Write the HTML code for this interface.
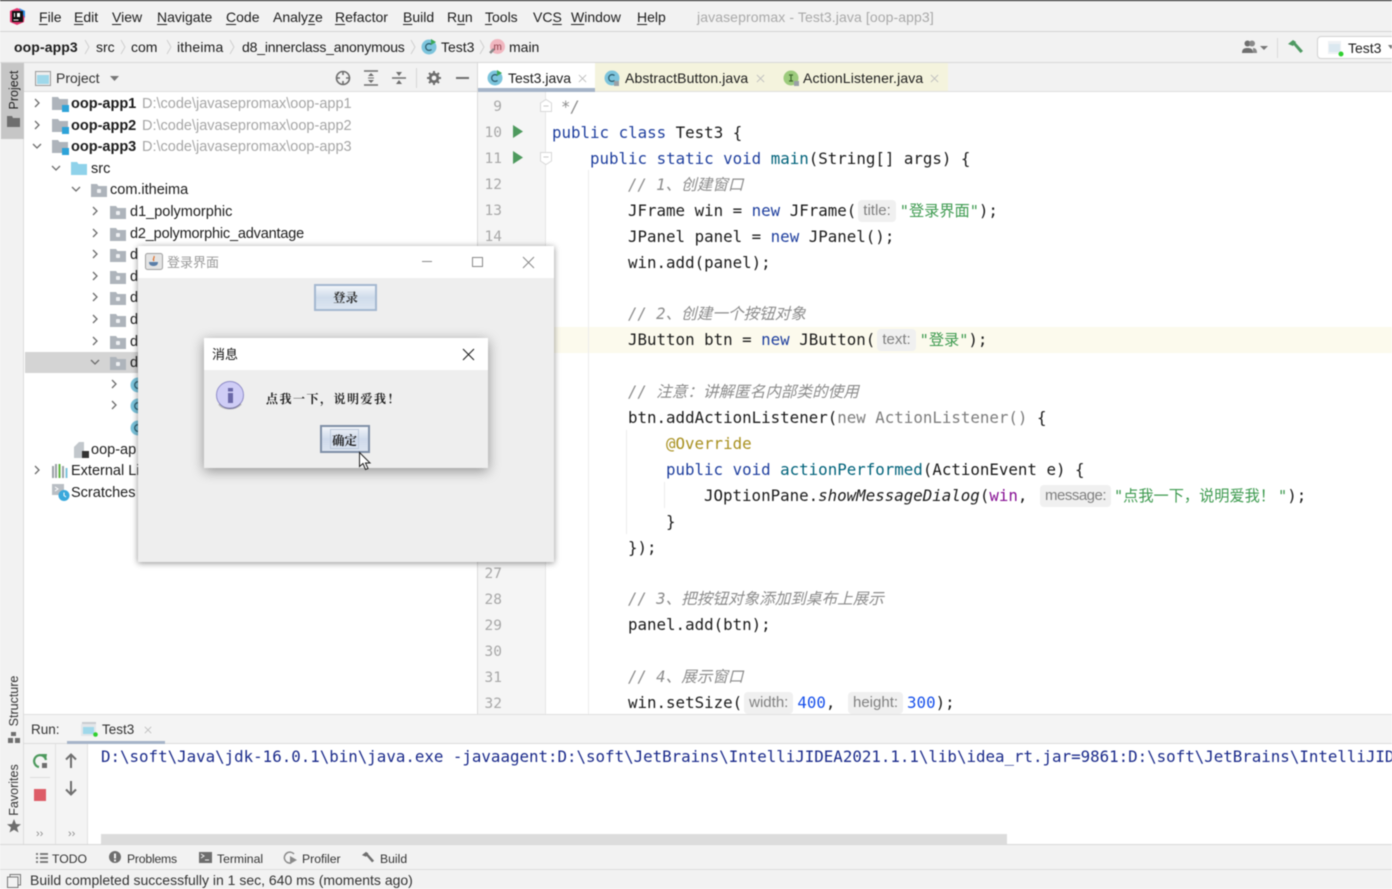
<!DOCTYPE html>
<html><head><meta charset="utf-8">
<style>
html,body{margin:0;padding:0;background:#fff}
#r{position:relative;width:1392px;height:889px;overflow:hidden;background:#fff;font-family:"Liberation Sans","Noto Sans CJK SC",sans-serif;font-size:14px;color:#1c1c1c;filter:blur(.4px)}
.a{position:absolute}
.t{position:absolute;white-space:pre;line-height:20px;height:20px}
.u{text-decoration:underline;text-underline-offset:2px;text-decoration-thickness:1px}
.c{position:absolute;white-space:pre;line-height:26px;height:26px;font-family:"DejaVu Sans Mono","Noto Sans CJK SC",monospace;font-size:15.8px;color:#1a1a1a}
.k{color:#1f3f9e}.m{color:#00627a}.s{color:#3d9a4f;font-size:15.2px}.g{font-style:italic;color:#8c8c8c;font-size:15.6px}.n{color:#1750eb}.an{color:#a8901f}.v{color:#871094}.f{color:#7d7d7d}
.h{display:inline-block;font-family:"Liberation Sans",sans-serif;font-size:15px;color:#808080;background:#f0f0f0;border-radius:4px;line-height:22px;height:22px;padding:0 5px;margin:0 4px 0 2px;vertical-align:1px;font-style:normal}
.ln{position:absolute;left:478px;width:24px;text-align:right;font-family:"DejaVu Sans Mono",monospace;font-size:14.5px;color:#a8a8a8;line-height:26px}
svg{position:absolute;overflow:visible}
.tr{font-size:14.5px}
.b{font-weight:bold}
.gr{color:#a6a6a6}
.st{font-size:12.2px;color:#333}
.sd{font-size:12.5px}
</style></head><body><div id="r">
<svg width="0" height="0" style="position:absolute"><defs>
<symbol id="fo" viewBox="0 0 16 14"><path d="M0 1h6l1.500 2H16v11H0z" fill="#aeb4bb"/><rect x="6" y="6" width="4" height="4" rx="1" fill="#eef0f2"/></symbol>
<symbol id="mo" viewBox="0 0 18 16"><path d="M0 1h6l1.500 2H16v11H0z" fill="#aeb4bb"/><rect x="10" y="9" width="7" height="7" fill="#2ea3d8"/></symbol>
<symbol id="ar" viewBox="0 0 10 10"><path d="M3 1l4 4-4 4" fill="none" stroke="#6e6e6e" stroke-width="1.300"/></symbol>
<symbol id="dn" viewBox="0 0 10 10"><path d="M1 3l4 4 4-4" fill="none" stroke="#6e6e6e" stroke-width="1.300"/></symbol>
<symbol id="cl" viewBox="0 0 16 16"><circle cx="8" cy="8" r="7.500" fill="#7cc4dc"/><path d="M10.500 5.600A3.400 3.400 0 1 0 10.500 10.400" fill="none" stroke="#2b5a6a" stroke-width="1.200"/></symbol>
<symbol id="x" viewBox="0 0 10 10"><path d="M1 1l8 8M9 1l-8 8" fill="none" stroke="#bdbdbd" stroke-width="1"/></symbol>
</defs></svg>

<!-- top chrome -->
<div class="a" style="left:0;top:0;width:1392px;height:1px;background:#111"></div>
<div class="a" style="left:0;top:1px;width:1392px;height:91px;background:#f2f2f2"></div>
<div class="a" style="left:0;top:31px;width:1392px;height:1px;background:#d4d4d4"></div>
<div class="a" style="left:0;top:62px;width:1392px;height:1px;background:#d8d8d8"></div>
<div class="a" style="left:0;top:91px;width:1392px;height:1px;background:#dedede"></div>

<!-- IJ logo -->
<svg style="left:9px;top:8px" width="17" height="17" viewBox="0 0 17 17"><path d="M1 3L8 0l8 3-1 11-7 3-7-3z" fill="#e2356e"/><path d="M10 0l6 3v7z" fill="#2f8fe8"/><rect x="3" y="3" width="11" height="11" fill="#111"/><rect x="4.500" y="11.500" width="5" height="1" fill="#fff"/><rect x="5" y="5" width="1" height="4" fill="#fff"/><rect x="8" y="5" width="3" height="4" fill="#fff"/></svg>

<div class="t" style="left:39px;top:7px"><span class="u">F</span>ile</div>
<div class="t" style="left:74px;top:7px"><span class="u">E</span>dit</div>
<div class="t" style="left:112px;top:7px"><span class="u">V</span>iew</div>
<div class="t" style="left:157px;top:7px"><span class="u">N</span>avigate</div>
<div class="t" style="left:226px;top:7px"><span class="u">C</span>ode</div>
<div class="t" style="left:273px;top:7px">Analy<span class="u">z</span>e</div>
<div class="t" style="left:335px;top:7px"><span class="u">R</span>efactor</div>
<div class="t" style="left:403px;top:7px"><span class="u">B</span>uild</div>
<div class="t" style="left:447px;top:7px">R<span class="u">u</span>n</div>
<div class="t" style="left:485px;top:7px"><span class="u">T</span>ools</div>
<div class="t" style="left:533px;top:7px">VC<span class="u">S</span></div>
<div class="t" style="left:571px;top:7px"><span class="u">W</span>indow</div>
<div class="t" style="left:637px;top:7px"><span class="u">H</span>elp</div>
<div class="t" style="left:697px;top:7px;color:#a9a9a9;letter-spacing:.1px">javasepromax - Test3.java [oop-app3]</div>

<!-- breadcrumbs -->
<div class="t b" style="left:14px;top:37px;letter-spacing:.1px">oop-app3</div>
<svg style="left:84px;top:39px" width="6" height="16" viewBox="0 0 6 16"><path d="M1 1l4 7-4 7" fill="none" stroke="#cfcfcf"/></svg>
<div class="t" style="left:96px;top:37px">src</div>
<svg style="left:120px;top:39px" width="6" height="16" viewBox="0 0 6 16"><path d="M1 1l4 7-4 7" fill="none" stroke="#cfcfcf"/></svg>
<div class="t" style="left:131px;top:37px">com</div>
<svg style="left:166px;top:39px" width="6" height="16" viewBox="0 0 6 16"><path d="M1 1l4 7-4 7" fill="none" stroke="#cfcfcf"/></svg>
<div class="t" style="left:177px;top:37px;letter-spacing:.2px">itheima</div>
<svg style="left:229px;top:39px" width="6" height="16" viewBox="0 0 6 16"><path d="M1 1l4 7-4 7" fill="none" stroke="#cfcfcf"/></svg>
<div class="t" style="left:242px;top:37px;letter-spacing:-.17px">d8_innerclass_anonymous</div>
<svg style="left:410px;top:39px" width="6" height="16" viewBox="0 0 6 16"><path d="M1 1l4 7-4 7" fill="none" stroke="#cfcfcf"/></svg>
<svg style="left:421px;top:39px" width="16" height="16"><use href="#cl"/><path d="M10 0l5 3-5 3z" fill="#3aa757"/></svg>
<div class="t" style="left:441px;top:37px">Test3</div>
<svg style="left:479px;top:39px" width="6" height="16" viewBox="0 0 6 16"><path d="M1 1l4 7-4 7" fill="none" stroke="#cfcfcf"/></svg>
<svg style="left:489px;top:39px" width="16" height="16" viewBox="0 0 16 16"><circle cx="8.500" cy="7.500" r="7.500" fill="#f1b7c0"/><path d="M1 14l4-4" stroke="#888" stroke-width="2.500"/><text x="4.500" y="11" font-size="10" fill="#8a3a46" font-family="Liberation Sans">m</text></svg>
<div class="t" style="left:509px;top:37px">main</div>

<!-- right toolbar -->
<svg style="left:1242px;top:40px" width="28" height="14" viewBox="0 0 28 14"><circle cx="5.500" cy="3.500" r="3" fill="#6e6e6e"/><circle cx="10" cy="3.500" r="3" fill="#8a8a8a"/><path d="M0 13c0-4 2-5 5.500-5S11 9 11 13z" fill="#6e6e6e"/><path d="M11 13h4c0-3-1-5-4-5z" fill="#8a8a8a"/><path d="M18 6h8l-4 4z" fill="#777"/></svg>
<div class="a" style="left:1277px;top:38px;width:1px;height:20px;background:#dadada"></div>
<svg style="left:1287px;top:39px" width="17" height="16" viewBox="0 0 17 16"><path d="M1 5l5-4 3 2-3 4z" fill="#4f9a63"/><path d="M5 4l2-2 9 10-2.500 2z" fill="#4f9a63"/></svg>
<div class="a" style="left:1317px;top:36px;width:90px;height:23px;background:#fff;border:1px solid #d2d2d2;border-radius:4px;box-sizing:border-box"></div>
<svg style="left:1327px;top:40px" width="17" height="17" viewBox="0 0 17 17"><rect x="1" y="1" width="13" height="13" fill="#eef1f4"/><rect x="2" y="4" width="11" height="8" fill="#dbe8f0"/><circle cx="14" cy="14" r="2.500" fill="#2fd02f"/></svg>
<div class="t" style="left:1348px;top:38px">Test3</div>
<svg style="left:1388px;top:45px" width="6" height="5"><path d="M0 0h6l-3 4z" fill="#777"/></svg>

<!-- left stripe -->
<div class="a" style="left:0;top:63px;width:24px;height:782px;background:#f2f2f2;border-right:1px solid #dcdcdc;box-sizing:border-box"></div>
<div class="a" style="left:1px;top:63px;width:23px;height:76px;background:#c6c6c6"></div>
<div class="t sd" style="left:14px;top:90px;transform:translate(-50%,-50%) rotate(-90deg);transform-origin:center;color:#222">Project</div>
<svg style="left:7px;top:116px" width="13" height="11"><path d="M0 0h5l1 2h7v9H0z" fill="#6e6e6e"/></svg>
<div class="t sd" style="left:14px;top:701px;transform:translate(-50%,-50%) rotate(-90deg);color:#333">Structure</div>
<svg style="left:8px;top:732px" width="12" height="11"><rect x="3" y="0" width="5" height="4" fill="#6e6e6e"/><rect x="0" y="6" width="5" height="5" fill="#6e6e6e"/><rect x="7" y="6" width="5" height="5" fill="#6e6e6e"/></svg>
<div class="t sd" style="left:14px;top:790px;transform:translate(-50%,-50%) rotate(-90deg);color:#333">Favorites</div>
<svg style="left:7px;top:819px" width="14" height="14" viewBox="0 0 14 14"><path d="M7 0l2 5 5 .3-4 3.200 1.500 5L7 10.700 2.500 13.500 4 8.500 0 5.300 5 5z" fill="#6e6e6e"/></svg>

<!-- project header -->
<svg style="left:35px;top:71px" width="16" height="15"><rect x=".5" y=".5" width="15" height="14" fill="#eee" stroke="#9a9a9a"/><rect x="2" y="4" width="12" height="9" fill="#9fd8ea"/></svg>
<div class="t" style="left:56px;top:68px;color:#333">Project</div>
<svg style="left:110px;top:76px" width="9" height="6"><path d="M0 0h9l-4.500 5z" fill="#777"/></svg>
<svg style="left:335px;top:70px" width="16" height="16" viewBox="0 0 16 16"><circle cx="8" cy="8" r="6.500" fill="none" stroke="#6e6e6e" stroke-width="1.600"/><path d="M8 1v4M8 11v4M1 8h4M11 8h4" stroke="#6e6e6e" stroke-width="1.600"/></svg>
<svg style="left:364px;top:70px" width="14" height="16" viewBox="0 0 14 16"><path d="M0 1h14M0 15h14" stroke="#6e6e6e" stroke-width="1.500"/><path d="M7 3l3 3H4zM7 13l3-3H4z" fill="#6e6e6e"/><path d="M4 8h6" stroke="#6e6e6e"/></svg>
<svg style="left:392px;top:70px" width="14" height="16" viewBox="0 0 14 16"><path d="M0 8h14" stroke="#6e6e6e" stroke-width="1.500"/><path d="M7 6l3-4H4zM7 10l3 4H4z" fill="#6e6e6e"/></svg>
<div class="a" style="left:416px;top:68px;width:1px;height:20px;background:#d6d6d6"></div>
<svg style="left:427px;top:71px" width="14" height="14" viewBox="0 0 14 14"><circle cx="7" cy="7" r="3.800" fill="none" stroke="#6e6e6e" stroke-width="2.800"/><path d="M7 0v2.500M7 11.500V14M0 7h2.500M11.500 7H14M2 2l2 2M10 10l2 2M12 2l-2 2M4 10l-2 2" stroke="#6e6e6e" stroke-width="2"/></svg>
<div class="a" style="left:456px;top:77px;width:13px;height:2px;background:#6e6e6e"></div>

<!-- tree -->
<div class="a" style="left:25px;top:352px;width:453px;height:21px;background:#d4d4d4"></div>
<svg style="left:32px;top:98px" width="10" height="10"><use href="#ar"/></svg>
<svg style="left:32px;top:120px" width="10" height="10"><use href="#ar"/></svg>
<svg style="left:32px;top:141px" width="10" height="10"><use href="#dn"/></svg>
<svg style="left:52px;top:96px" width="18" height="16"><use href="#mo"/></svg>
<svg style="left:52px;top:118px" width="18" height="16"><use href="#mo"/></svg>
<svg style="left:52px;top:139px" width="18" height="16"><use href="#mo"/></svg>
<div class="t tr b" style="left:71px;top:94px">oop-app1</div><div class="t tr gr" style="left:142px;top:94px">D:\code\javasepromax\oop-app1</div>
<div class="t tr b" style="left:71px;top:116px">oop-app2</div><div class="t tr gr" style="left:142px;top:116px">D:\code\javasepromax\oop-app2</div>
<div class="t tr b" style="left:71px;top:137px">oop-app3</div><div class="t tr gr" style="left:142px;top:137px">D:\code\javasepromax\oop-app3</div>
<svg style="left:51px;top:163px" width="10" height="10"><use href="#dn"/></svg>
<svg style="left:71px;top:161px" width="16" height="14" viewBox="0 0 16 14"><path d="M0 1h6l1.500 2H16v11H0z" fill="#8fd2ea"/></svg>
<div class="t tr" style="left:91px;top:159px">src</div>
<svg style="left:71px;top:184px" width="10" height="10"><use href="#dn"/></svg>
<svg style="left:91px;top:183px" width="16" height="14"><use href="#fo"/></svg>
<div class="t tr" style="left:110px;top:180px">com.itheima</div>
<svg style="left:90px;top:206px" width="10" height="10"><use href="#ar"/></svg>
<svg style="left:110px;top:205px" width="16" height="14"><use href="#fo"/></svg>
<div class="t tr" style="left:130px;top:202px">d1_polymorphic</div>
<svg style="left:90px;top:228px" width="10" height="10"><use href="#ar"/></svg>
<svg style="left:110px;top:227px" width="16" height="14"><use href="#fo"/></svg>
<div class="t tr" style="left:130px;top:224px;letter-spacing:-.17px">d2_polymorphic_advantage</div>
<svg style="left:90px;top:249px" width="10" height="10"><use href="#ar"/></svg><svg style="left:110px;top:248px" width="16" height="14"><use href="#fo"/></svg><div class="t tr" style="left:130px;top:245px">d</div>
<svg style="left:90px;top:271px" width="10" height="10"><use href="#ar"/></svg><svg style="left:110px;top:270px" width="16" height="14"><use href="#fo"/></svg><div class="t tr" style="left:130px;top:267px">d</div>
<svg style="left:90px;top:292px" width="10" height="10"><use href="#ar"/></svg><svg style="left:110px;top:291px" width="16" height="14"><use href="#fo"/></svg><div class="t tr" style="left:130px;top:288px">d</div>
<svg style="left:90px;top:314px" width="10" height="10"><use href="#ar"/></svg><svg style="left:110px;top:313px" width="16" height="14"><use href="#fo"/></svg><div class="t tr" style="left:130px;top:310px">d</div>
<svg style="left:90px;top:336px" width="10" height="10"><use href="#ar"/></svg><svg style="left:110px;top:335px" width="16" height="14"><use href="#fo"/></svg><div class="t tr" style="left:130px;top:332px">d</div>
<svg style="left:90px;top:357px" width="10" height="10"><use href="#dn"/></svg><svg style="left:110px;top:356px" width="16" height="14"><use href="#fo"/></svg><div class="t tr" style="left:130px;top:353px">d</div>
<svg style="left:109px;top:379px" width="10" height="10"><use href="#ar"/></svg><svg style="left:130px;top:377px" width="16" height="16"><use href="#cl"/></svg>
<svg style="left:109px;top:400px" width="10" height="10"><use href="#ar"/></svg><svg style="left:130px;top:398px" width="16" height="16"><use href="#cl"/></svg>
<svg style="left:130px;top:420px" width="16" height="16"><use href="#cl"/></svg>
<svg style="left:74px;top:442px" width="16" height="16" viewBox="0 0 16 16"><path d="M0 5l5-5h5v16H0z" fill="#c2c7cc"/><rect x="8" y="9" width="7" height="7" fill="#333"/></svg>
<div class="t tr" style="left:91px;top:440px">oop-ap</div>
<svg style="left:32px;top:465px" width="10" height="10"><use href="#ar"/></svg>
<svg style="left:52px;top:463px" width="16" height="15" viewBox="0 0 16 15"><rect y="3" width="2" height="12" fill="#9aa0a6"/><rect x="3" y="1" width="2" height="14" fill="#9aa0a6"/><rect x="6.500" y="1" width="2" height="14" fill="#62b543"/><rect x="10" y="3" width="2" height="12" fill="#9aa0a6"/><rect x="13.500" y="5" width="2" height="10" fill="#7cc4dc"/></svg>
<div class="t tr" style="left:71px;top:461px">External Lil</div>
<svg style="left:52px;top:484px" width="18" height="17" viewBox="0 0 18 17"><path d="M0 0h12v11H0z" fill="#b9bec4"/><path d="M3 3l3 2-3 2" stroke="#fff" fill="none"/><circle cx="12" cy="11.500" r="5.500" fill="#3aa9dc"/><path d="M12 8.500v3l2 1.500" stroke="#fff" fill="none"/></svg>
<div class="t tr" style="left:71px;top:483px">Scratches a</div>

<!-- tabs -->
<div class="a" style="left:477px;top:63px;width:1px;height:651px;background:#dadada"></div>
<div class="a" style="left:478px;top:63px;width:117px;height:28px;background:#fff"></div>
<div class="a" style="left:478px;top:88px;width:117px;height:4px;background:#a6b4c8"></div>
<div class="a" style="left:595px;top:63px;width:353px;height:28px;background:#f4f3dd"></div>
<svg style="left:487px;top:70px" width="16" height="16"><use href="#cl"/><path d="M10 0l5 3-5 3z" fill="#3aa757"/></svg>
<div class="t" style="left:508px;top:68px">Test3.java</div>
<svg style="left:578px;top:74px" width="9" height="9"><use href="#x"/></svg>
<svg style="left:604px;top:70px" width="16" height="16"><use href="#cl"/><rect x="10" y="11" width="5" height="5" fill="#9aa0a6"/></svg>
<div class="t" style="left:625px;top:68px;letter-spacing:.1px">AbstractButton.java</div>
<svg style="left:756px;top:74px" width="9" height="9"><use href="#x"/></svg>
<svg style="left:783px;top:70px" width="16" height="16" viewBox="0 0 16 16"><circle cx="8" cy="8" r="7.500" fill="#9ccb7c"/><path d="M6 5h4M8 5v6M6 11h4" stroke="#3e6a2c" stroke-width="1.200"/><rect x="11" y="11" width="5" height="5" fill="#9aa0a6"/></svg>
<div class="t" style="left:803px;top:68px;letter-spacing:.15px">ActionListener.java</div>
<svg style="left:930px;top:74px" width="9" height="9"><use href="#x"/></svg>

<!-- editor -->
<div class="a" style="left:478px;top:92px;width:68px;height:622px;background:#f5f5f5;border-right:1px solid #e6e6e6;box-sizing:border-box"></div>
<div class="a" style="left:546px;top:327px;width:846px;height:26px;background:#fcfaed"></div>
<div class="a" style="left:588px;top:170px;width:1px;height:544px;background:#ececec"></div>
<div class="a" style="left:626px;top:430px;width:1px;height:104px;background:#ececec"></div>
<div class="a" style="left:664px;top:482px;width:1px;height:26px;background:#ececec"></div>
<div class="ln" style="top:94px">9</div>
<div class="ln" style="top:120px">10</div>
<div class="ln" style="top:146px">11</div>
<div class="ln" style="top:172px">12</div>
<div class="ln" style="top:198px">13</div>
<div class="ln" style="top:224px">14</div>
<div class="ln" style="top:561px">27</div>
<div class="ln" style="top:587px">28</div>
<div class="ln" style="top:613px">29</div>
<div class="ln" style="top:639px">30</div>
<div class="ln" style="top:665px">31</div>
<div class="ln" style="top:691px">32</div>
<svg style="left:513px;top:125px" width="10" height="13"><path d="M0 0l10 6.500L0 13z" fill="#4e9a5e"/></svg>
<svg style="left:513px;top:151px" width="10" height="13"><path d="M0 0l10 6.500L0 13z" fill="#4e9a5e"/></svg>
<svg style="left:540px;top:99px" width="12" height="13"><path d="M.5 12.500V4L6 .5 11.500 4v8.500z" fill="#fff" stroke="#d8d8d8"/><path d="M3.500 7h5" stroke="#c8c8c8"/></svg>
<svg style="left:540px;top:152px" width="12" height="13"><path d="M.5.500V9L6 12.500 11.500 9V.5z" fill="#fff" stroke="#d8d8d8"/><path d="M3.500 5h5" stroke="#c8c8c8"/></svg>

<div class="c g" style="left:561px;top:94px">*/</div>
<div class="c" style="left:552px;top:120px"><span class="k">public class</span> Test3 {</div>
<div class="c" style="left:590px;top:146px"><span class="k">public static void</span> <span class="m">main</span>(String[] args) {</div>
<div class="c g" style="left:628px;top:172px">// 1、创建窗口</div>
<div class="c" style="left:628px;top:198px">JFrame win = <span class="k">new</span> JFrame(<span class="h">title:</span><span class="s">"登录界面"</span>);</div>
<div class="c" style="left:628px;top:224px">JPanel panel = <span class="k">new</span> JPanel();</div>
<div class="c" style="left:628px;top:250px">win.add(panel);</div>
<div class="c g" style="left:628px;top:301px">// 2、创建一个按钮对象</div>
<div class="c" style="left:628px;top:327px">JButton btn = <span class="k">new</span> JButton(<span class="h">text:</span><span class="s">"登录"</span>);</div>
<div class="c g" style="left:628px;top:379px">// 注意&#xFF1A;讲解匿名内部类的使用</div>
<div class="c" style="left:628px;top:405px">btn.addActionListener(<span class="f">new ActionListener()</span> {</div>
<div class="c an" style="left:666px;top:431px">@Override</div>
<div class="c" style="left:666px;top:457px"><span class="k">public void</span> <span class="m">actionPerformed</span>(ActionEvent e) {</div>
<div class="c" style="left:704px;top:483px">JOptionPane.<i>showMessageDialog</i>(<span class="v">win</span>,</div>
<div class="c" style="left:1038px;top:483px"><span class="h" style="letter-spacing:-.5px">message:</span></div>
<div class="c" style="left:1114px;top:483px"><span class="s">"点我一下&#xFF0C;说明爱我&#xFF01;<span style="margin-left:3px">"</span></span>);</div>
<div class="c" style="left:666px;top:509px">}</div>
<div class="c" style="left:628px;top:535px">});</div>
<div class="c g" style="left:628px;top:586px">// 3、把按钮对象添加到桌布上展示</div>
<div class="c" style="left:628px;top:612px">panel.add(btn);</div>
<div class="c g" style="left:628px;top:664px">// 4、展示窗口</div>
<div class="c" style="left:628px;top:690px">win.setSize(<span class="h">width:</span><span class="n">400</span>,</div>
<div class="c" style="left:846px;top:690px"><span class="h">height:</span><span class="n">300</span>);</div>

<!-- java frame -->
<div class="a" style="left:138px;top:246px;width:416px;height:316px;background:#eeeeee;box-shadow:0 1px 6px rgba(0,0,0,.45)"></div>
<div class="a" style="left:138px;top:246px;width:416px;height:32px;background:#fff"></div>
<svg style="left:145px;top:253px" width="18" height="17" viewBox="0 0 18 17"><rect x=".5" y=".5" width="17" height="16" rx="2" fill="#e4e4e4" stroke="#a0a0a0"/><path d="M9 3c1 2-2 3 0 5" stroke="#e0702a" fill="none" stroke-width="1.200"/><path d="M4 9h9c0 3-2 4-4.500 4S4 12 4 9z" fill="#5a7ea8"/></svg>
<div class="t" style="left:167px;top:253px;font-size:13px;color:#9a9a9a">登录界面</div>
<div class="a" style="left:422px;top:261px;width:10px;height:1px;background:#8a8a8a"></div>
<div class="a" style="left:472px;top:257px;width:11px;height:10px;border:1px solid #8a8a8a;box-sizing:border-box"></div>
<svg style="left:523px;top:257px" width="11" height="11"><path d="M0 0l11 11M11 0L0 11" stroke="#8a8a8a"/></svg>
<div class="a" style="left:314px;top:284px;width:63px;height:27px;box-sizing:border-box;border:2px solid #a4b8d0;background:linear-gradient(#f2f5f9,#cfdceb 50%,#dde6f1)"></div>
<div class="t" style="left:333px;top:287px;font-family:'Noto Serif CJK SC','Liberation Serif',serif;font-size:12.5px;font-weight:bold;color:#333">登录</div>

<!-- message dialog -->
<div class="a" style="left:204px;top:338px;width:284px;height:130px;background:#eeeeee;box-shadow:0 3px 12px rgba(0,0,0,.4)"></div>
<div class="a" style="left:204px;top:338px;width:284px;height:32px;background:#fff"></div>
<div class="t" style="left:212px;top:345px;font-size:13px;color:#111">消息</div>
<svg style="left:463px;top:349px" width="11" height="11"><path d="M0 0l11 11M11 0L0 11" stroke="#222" stroke-width="1.100"/></svg>
<svg style="left:215px;top:380px" width="32" height="32" viewBox="0 0 32 32"><circle cx="15" cy="15" r="13.500" fill="#cfcdf6" stroke="#8f8cc8" stroke-width="1"/><rect x="13" y="13" width="5" height="10" fill="#6a68a8"/><rect x="13" y="8" width="5" height="3.500" fill="#6a68a8"/><path d="M4 24c3 5 15 7 22 0" stroke="rgba(0,0,0,.2)" fill="none" stroke-width="2"/></svg>
<div class="t" style="left:266px;top:389px;font-family:'Noto Serif CJK SC','Liberation Serif',serif;font-size:12px;font-weight:bold;color:#222;letter-spacing:1.500px">点我一下&#xFF0C;说明爱我&#xFF01;</div>
<div class="a" style="left:320px;top:425px;width:50px;height:28px;box-sizing:border-box;border:2px solid #7f8fa6;background:linear-gradient(#f2f5f9,#cfdaeb 50%,#dbe4f0)"></div>
<div class="a" style="left:330px;top:429px;width:29px;height:20px;border:1px solid #bcc9db;box-sizing:border-box"></div>
<div class="t" style="left:332px;top:430px;font-family:'Noto Serif CJK SC','Liberation Serif',serif;font-size:12.5px;font-weight:bold;color:#222">确定</div>
<svg style="left:359px;top:452px" width="12" height="18" viewBox="0 0 12 18"><path d="M.5.500v14l3.500-3 2.500 6 2.500-1-2.500-5.500h4.500z" fill="#fff" stroke="#222" stroke-width="1"/></svg>

<!-- run panel -->
<div class="a" style="left:24px;top:714px;width:1368px;height:30px;background:#f4f4f4;border-top:1px solid #e0e0e0;border-bottom:1px solid #dcdcdc;box-sizing:border-box"></div>
<div class="t" style="left:31px;top:720px;font-size:13.5px;color:#333">Run:</div>
<svg style="left:81px;top:722px" width="17" height="15" viewBox="0 0 17 15"><rect x="1" y="0" width="14" height="3" fill="#c8ccd0"/><rect x="0" y="2" width="15" height="12" fill="#e3e6e9"/><rect x="2" y="5" width="11" height="7" fill="#9fd8ea"/><circle cx="14.500" cy="12.500" r="2.300" fill="#2fd02f"/></svg>
<div class="t" style="left:102px;top:720px;font-size:13.5px;color:#333">Test3</div>
<svg style="left:144px;top:726px" width="8" height="8"><use href="#x"/></svg>
<div class="a" style="left:67px;top:741px;width:98px;height:3px;background:#a6b4c8"></div>
<div class="a" style="left:24px;top:744px;width:32px;height:101px;background:#f4f4f4;border-right:1px solid #e2e2e2;box-sizing:border-box"></div>
<div class="a" style="left:56px;top:744px;width:32px;height:101px;background:#f4f4f4;border-right:1px solid #e2e2e2;box-sizing:border-box"></div>
<svg style="left:32px;top:753px" width="17" height="16" viewBox="0 0 17 16"><path d="M14 7A6 6 0 1 0 7 14" fill="none" stroke="#4e9a5e" stroke-width="2.200"/><path d="M9 1l6 0-1 6z" fill="#4e9a5e"/><rect x="10" y="10" width="5" height="5" fill="#6e6e6e"/></svg>
<div class="a" style="left:30px;top:777px;width:20px;height:1px;background:#dcdcdc"></div>
<div class="a" style="left:34px;top:789px;width:12px;height:12px;background:#dd5c67"></div>
<svg style="left:65px;top:753px" width="12" height="15" viewBox="0 0 12 15"><path d="M6 15V2M1 6.500L6 1.500l5 5" fill="none" stroke="#6e6e6e" stroke-width="2"/></svg>
<svg style="left:65px;top:781px" width="12" height="15" viewBox="0 0 12 15"><path d="M6 0v13M1 8.500l5 5 5-5" fill="none" stroke="#6e6e6e" stroke-width="2"/></svg>
<div class="t" style="left:36px;top:824px;font-size:11px;color:#8c8c8c">››</div>
<div class="t" style="left:68px;top:824px;font-size:11px;color:#8c8c8c">››</div>
<div class="c" style="left:101px;top:744px;color:#1a2a8a">D:\soft\Java\jdk-16.0.1\bin\java.exe -javaagent:D:\soft\JetBrains\IntelliJIDEA2021.1.1\lib\idea_rt.jar=9861:D:\soft\JetBrains\IntelliJIDEA2021.1.1\bin</div>
<div class="a" style="left:101px;top:834px;width:906px;height:10px;background:#dcdcdc"></div>

<!-- bottom bars -->
<div class="a" style="left:0;top:844px;width:1392px;height:45px;background:#f2f2f2"></div>
<div class="a" style="left:0;top:844px;width:1392px;height:1px;background:#d8d8d8"></div>
<div class="a" style="left:0;top:869px;width:1392px;height:1px;background:#dcdcdc"></div>
<svg style="left:36px;top:853px" width="12" height="10"><path d="M0 1h2M4 1h8M0 5h2M4 5h8M0 9h2M4 9h8" stroke="#6e6e6e" stroke-width="1.800"/></svg>
<div class="t st" style="left:52px;top:849px">TODO</div>
<svg style="left:109px;top:851px" width="12" height="12"><circle cx="6" cy="6" r="6" fill="#6e6e6e"/><rect x="5" y="2.500" width="2" height="5" fill="#f2f2f2"/><rect x="5" y="8.500" width="2" height="2" fill="#f2f2f2"/></svg>
<div class="t st" style="left:127px;top:849px;letter-spacing:-.2px">Problems</div>
<svg style="left:199px;top:852px" width="13" height="11"><rect width="13" height="11" fill="#6e6e6e"/><path d="M2 2l3 2-3 2M6 8h4" stroke="#f2f2f2" fill="none"/></svg>
<div class="t st" style="left:217px;top:849px">Terminal</div>
<svg style="left:283px;top:851px" width="15" height="14" viewBox="0 0 15 14"><path d="M11 3a5.500 5.500 0 1 0-3 9" fill="none" stroke="#8a8a8a" stroke-width="1.500"/><path d="M7 5l7 4-7 4z" fill="#8a8a8a"/></svg>
<div class="t st" style="left:302px;top:849px">Profiler</div>
<svg style="left:361px;top:851px" width="14" height="13" viewBox="0 0 17 16"><path d="M1 5l5-4 3 2-3 4z" fill="#6e6e6e"/><path d="M5 4l2-2 9 10-2.500 2z" fill="#6e6e6e"/></svg>
<div class="t st" style="left:380px;top:849px">Build</div>
<svg style="left:7px;top:874px" width="14" height="14" viewBox="0 0 14 14"><rect x="3" y=".5" width="10.500" height="10.500" fill="none" stroke="#777"/><rect x=".5" y="3" width="10.500" height="10.500" fill="#f2f2f2" stroke="#777"/></svg>
<div class="t" style="left:30px;top:870px;font-size:14px;color:#333">Build completed successfully in 1 sec, 640 ms (moments ago)</div>
</div></body></html>
